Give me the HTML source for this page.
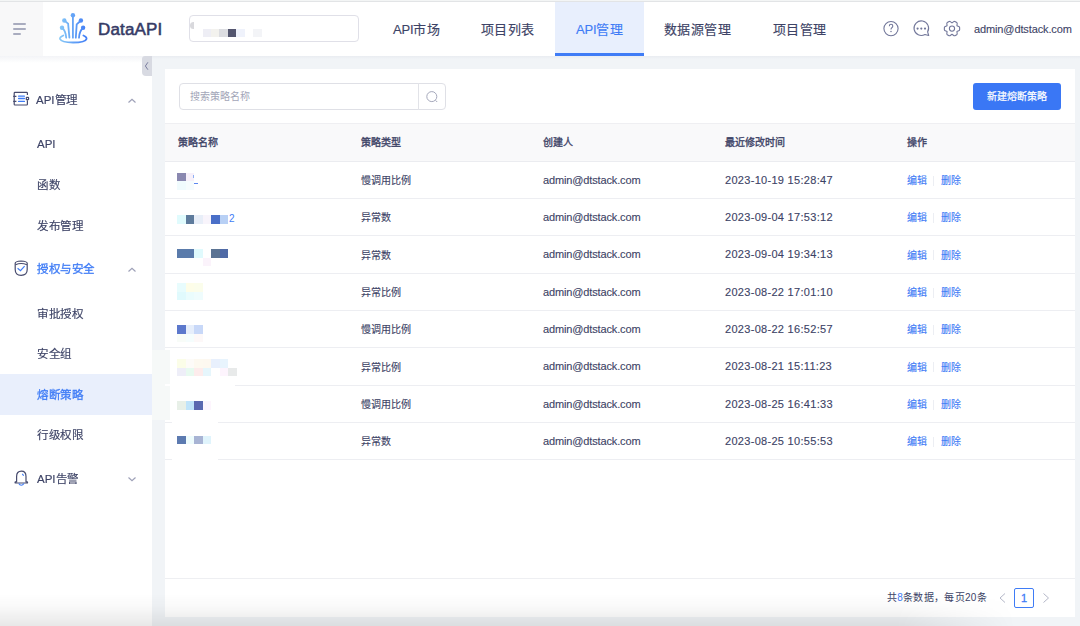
<!DOCTYPE html>
<html lang="zh-CN"><head><meta charset="utf-8">
<style>
*{box-sizing:border-box;margin:0;padding:0}
html,body{width:1080px;height:626px;overflow:hidden;background:#fff;font-family:"Liberation Sans",sans-serif;color:#3d4366}
.abs{position:absolute}
#top{position:absolute;left:0;top:0;width:1080px;height:2px;border-top:1px solid #f3f5f5;background:#e2e4e6}
#hdr{position:absolute;left:0;top:2px;width:1080px;height:54px;background:#fff}
#hamb{position:absolute;left:0;top:2px;width:43px;height:54px;background:#f8f8f9}
#hamb i{position:absolute;left:13px;margin-top:-1px;height:2px;background:#a9acbf;border-radius:1px}
.nav{position:absolute;top:2px;height:55px;font-size:13px;letter-spacing:0.4px;line-height:55px;color:#3d4366;-webkit-text-stroke:0.15px currentColor;white-space:nowrap}
#side{position:absolute;left:0;top:56px;width:152px;height:570px;background:#fff}
#main{position:absolute;left:152px;top:56px;width:928px;height:570px;background:linear-gradient(#e9ecf1,#f1f4f7 3px)}
#card{position:absolute;left:165px;top:69px;width:910px;height:548px;background:#fff}
.si{position:absolute;left:37px;transform:scale(0.96);transform-origin:0 0;font-size:12px;color:#3d4366;-webkit-text-stroke:0.15px currentColor;line-height:16px;white-space:nowrap}
.th{position:absolute;top:135px;font-size:10px;font-weight:400;-webkit-text-stroke:0.35px #3d4366;color:#3d4366;line-height:16px;white-space:nowrap}
.row{position:absolute;left:165px;width:910px}
.ln{position:absolute;left:165px;width:910px;height:1px;background:#edeef2}
.row div{position:absolute;top:1px;line-height:inherit;font-size:10px;color:#3d4366;-webkit-text-stroke:0.12px currentColor;white-space:nowrap}
.row .op{color:#3f7cf6}
.row .em{font-size:11px;letter-spacing:-0.14px;top:0}
.row .dt{font-size:11px;letter-spacing:0.3px;top:0}
.row .sep{top:13.5px;width:1px;height:10px;background:#eceef3}
.mz{position:absolute}
#mz i{position:absolute;width:8.5px;height:8.5px}
</style></head><body>
<div id="top"></div>
<div id="hdr"></div>
<div id="hamb"><i style="top:22px;width:13px"></i><i style="top:27px;width:13px"></i><i style="top:32px;width:8px"></i></div>

<svg class="abs" style="left:55px;top:8px" width="40" height="40" viewBox="0 0 40 40">
<defs><linearGradient id="lg" gradientUnits="userSpaceOnUse" x1="5" y1="0" x2="32" y2="0"><stop offset="0" stop-color="#86c8f7"/><stop offset="1" stop-color="#3f7cf6"/></linearGradient></defs>
<g fill="none" stroke="url(#lg)" stroke-width="1.8" stroke-linecap="round">
<path d="M17.9 7.3V29.7"/>
<path d="M9.3 12.5L13.1 15.6L14.4 29.7"/>
<path d="M7 19.8Q10.6 22.5 11.2 29.7"/>
<path d="M25.9 12.5L21.7 16.3L20.8 29.7"/>
<path d="M28.1 19.8Q24.4 23 24 29.7"/>
<path d="M8.3 27.5Q4.6 29 5 31Q6.5 34.5 18 34.5Q30.5 34.5 31.5 31Q32 29 28.4 27.5"/>
</g>
<g fill="url(#lg)"><circle cx="17.9" cy="7.3" r="2.2"/><circle cx="9.3" cy="12.5" r="2.2"/><circle cx="7" cy="19.8" r="2.2"/><circle cx="25.9" cy="12.5" r="2.2"/><circle cx="28.1" cy="19.8" r="2.2"/></g>
</svg>

<div class="abs" style="left:98px;top:19px;font-size:17px;font-weight:normal;-webkit-text-stroke:0.55px #363b66;letter-spacing:0.15px;color:#363b66;line-height:22px">DataAPI</div>

<div class="abs" style="left:189px;top:15px;width:170px;height:27px;border:1px solid #e0e0e8;border-radius:4px"></div>
<div class="mz" style="left:202.5px;top:28.7px;width:8.3px;height:8px;background:#eeeef5"></div>
<div class="mz" style="left:210.8px;top:28.7px;width:8.2px;height:8px;background:#f3f2ee"></div>
<div class="mz" style="left:219px;top:28.7px;width:9px;height:8px;background:#dcdde1"></div>
<div class="mz" style="left:228px;top:28.7px;width:8px;height:8px;background:#54566f"></div>
<div class="mz" style="left:236px;top:28.7px;width:8.5px;height:8px;background:#eff2fb"></div>
<div class="mz" style="left:253px;top:28.7px;width:9px;height:8px;background:#f3f4f7"></div>
<div class="mz" style="left:189.5px;top:22px;width:4.5px;height:7px;background:#d9d9dd;border-radius:4px 0 0 4px"></div>

<div class="nav" style="left:393px"><span style="letter-spacing:-0.2px">API</span>市场</div>
<div class="nav" style="left:481px">项目列表</div>
<div class="abs" style="left:555px;top:2px;width:89px;height:54px;background:#e8effd"></div>
<div class="abs" style="left:555px;top:53px;width:89px;height:3px;background:#3f7cf6"></div>
<div class="nav" style="left:576px;color:#3f7cf6"><span style="letter-spacing:-0.2px">API</span>管理</div>
<div class="nav" style="left:664px">数据源管理</div>
<div class="nav" style="left:773px">项目管理</div>

<svg class="abs" style="left:876px;top:14px" width="90" height="30" viewBox="0 0 90 30">
<g fill="none" stroke="#72779a" stroke-width="1.1">
<circle cx="15" cy="14.6" r="7.1"/>
<path d="M13.3 12.2Q13.3 10.3 15 10.3Q16.8 10.3 16.8 12Q16.8 13.1 15.8 13.7Q15 14.2 15 15.6"/>
<path d="M51.62 17.85A7.3 7.3 0 1 0 48.95 20.52L52.7 21.5Z" stroke-linejoin="round"/>
<circle cx="76" cy="14.6" r="2.6"/>
<path d="M80.94 11.75 L83.25 12.79 L83.63 13.53 L83.63 15.67 L83.25 16.41 L80.94 17.45 L81.19 19.97 L80.74 20.67 L78.88 21.74 L78.06 21.78 L76.00 20.30 L73.94 21.78 L73.12 21.74 L71.26 20.67 L70.81 19.97 L71.06 17.45 L68.75 16.41 L68.37 15.67 L68.37 13.53 L68.75 12.79 L71.06 11.75 L70.81 9.23 L71.26 8.53 L73.12 7.46 L73.94 7.42 L76.00 8.90 L78.06 7.42 L78.88 7.46 L80.74 8.53 L81.19 9.23Z" stroke-linejoin="round"/>
</g>
<g fill="#72779a"><circle cx="15" cy="17.5" r="0.75"/><circle cx="41.6" cy="14.6" r="1.1"/><circle cx="45.3" cy="14.6" r="1.1"/><circle cx="49" cy="14.6" r="1.1"/></g>
</svg>

<div class="abs" style="left:974px;top:21px;font-size:11px;letter-spacing:-0.12px;line-height:16px;color:#3d4366;-webkit-text-stroke:0.1px currentColor;white-space:nowrap">admin@dtstack.com</div>

<div id="side"></div>
<div id="main"></div>
<div class="abs" style="left:0;top:56px;width:152px;height:7px;background:linear-gradient(#f3f4f7,#fff)"></div>
<div class="abs" style="left:141.5px;top:56px;width:10.5px;height:20px;background:#d8dae2;border-radius:3px 0 0 4px"></div>
<svg class="abs" style="left:141px;top:56px" width="11" height="20"><path d="M6.9 6.3L4.4 10L6.9 13.7" fill="none" stroke="#6f7396" stroke-width="0.9"/></svg>

<!-- sidebar -->
<svg class="abs" style="left:8px;top:88px" width="40" height="24" viewBox="0 0 40 24">
<g fill="none" stroke="#474b6e" stroke-width="1.2">
<path d="M19.4 7V5.2Q19.4 4.4 18.6 4.4H7Q6.2 4.4 6.2 5.2V16.2Q6.2 17 7 17H18.6Q19.4 17 19.4 16.2V12.2"/>
<path d="M5.2 8.3H8.4M5.2 13.4H8.4"/>
<rect x="18.3" y="9.4" width="2.3" height="2.3" rx="0.5"/>
</g>
<g stroke="#3f7cf6" stroke-width="1.3" stroke-linecap="round"><path d="M10.6 8.2H16.4M10.6 10.5H16.4M10.6 13.4H16.4"/></g>
</svg>
<div class="si" style="left:36px;top:92px">API管理</div>
<svg class="abs" style="left:126px;top:96px" width="12" height="10"><path d="M2.5 6.5L6 3.2L9.5 6.5" fill="none" stroke="#9ea1b8" stroke-width="1.2"/></svg>
<div class="si" style="top:136px">API</div>
<div class="si" style="top:176.5px">函数</div>
<div class="si" style="top:217.5px">发布管理</div>

<svg class="abs" style="left:8px;top:256px" width="40" height="26" viewBox="0 0 40 26">
<path d="M7.2 7.3Q7.2 5.3 13 5Q19.2 5.3 19.2 7.3V13.5Q19.2 19.3 13.1 19.3Q7.2 19.3 7.2 13.5Z" fill="none" stroke="#474b6e" stroke-width="1.2"/>
<path d="M7.5 8.7Q13.1 6.4 18.9 8.7" fill="none" stroke="#474b6e" stroke-width="1.1"/>
<path d="M9.6 12.2L12.5 14.6L16.6 10.2" fill="none" stroke="#3f7cf6" stroke-width="1.2"/>
</svg>
<div class="si" style="top:261px;color:#3f7cf6;-webkit-text-stroke:0.3px #3f7cf6">授权与安全</div>
<svg class="abs" style="left:126px;top:265px" width="12" height="10"><path d="M2.5 6.5L6 3.2L9.5 6.5" fill="none" stroke="#9ea1b8" stroke-width="1.2"/></svg>
<div class="si" style="top:305.5px">审批授权</div>
<div class="si" style="top:345.5px">安全组</div>
<div class="abs" style="left:0;top:374px;width:152px;height:41px;background:#e9effc"></div>
<div class="si" style="top:387px;color:#3f7cf6;-webkit-text-stroke:0.3px #3f7cf6">熔断策略</div>
<div class="si" style="top:427px">行级权限</div>

<svg class="abs" style="left:8px;top:466px" width="40" height="26" viewBox="0 0 40 26">
<path d="M8.6 15.6V10.5Q8.6 5.2 13.4 5.2Q18 5.2 18 10.5V15.6Q19.6 15.6 19.6 16.4Q19.6 17 18.7 17H8Q7 17 7 16.4Q7 15.6 8.6 15.6Z" fill="none" stroke="#474b6e" stroke-width="1.2"/>
<path d="M10.8 17.6Q11.6 19.3 13.3 19.3Q15 19.3 15.9 17.6" fill="none" stroke="#3f7cf6" stroke-width="1.1"/>
<path d="M14.1 8.1Q15.2 8.6 15.5 9.8" fill="none" stroke="#3f7cf6" stroke-width="1.1"/>
</svg>
<div class="si" style="top:471px">API告警</div>
<svg class="abs" style="left:126px;top:474px" width="12" height="10"><path d="M2.5 3.5L6 6.8L9.5 3.5" fill="none" stroke="#9ea1b8" stroke-width="1.2"/></svg>

<!-- card -->
<div id="card"></div>
<div class="abs" style="left:179px;top:83px;width:267px;height:27px;border:1px solid #dfe0e6;border-radius:4px"></div>
<div class="abs" style="left:418px;top:83px;width:1px;height:27px;background:#e2e3e8"></div>
<div class="abs" style="left:190px;top:89px;font-size:10px;line-height:16px;color:#a3a6b8">搜索策略名称</div>
<svg class="abs" style="left:424px;top:89px" width="16" height="16"><circle cx="7.8" cy="7.6" r="5" fill="none" stroke="#a5a8bb" stroke-width="1"/><path d="M11.5 11.3L13.2 13" stroke="#a5a8bb" stroke-width="1"/></svg>

<div class="abs" style="left:973px;top:83px;width:88px;height:27px;background:#3a77f5;border-radius:3px;color:#fff;-webkit-text-stroke:0.2px #fff;font-size:10px;line-height:27px;text-align:center;white-space:nowrap">新建熔断策略</div>

<div class="abs" style="left:165px;top:123px;width:910px;height:39px;background:#f9f9fa;border-top:1px solid #efeff2;border-bottom:1px solid #ebecf0"></div>
<div class="th" style="left:178px">策略名称</div>
<div class="th" style="left:361px">策略类型</div>
<div class="th" style="left:543px">创建人</div>
<div class="th" style="left:725px">最近修改时间</div>
<div class="th" style="left:907px">操作</div>

<div class="row" style="top:162px;height:36px;line-height:36px"><div style="left:196px">慢调用比例</div><div class="em" style="left:378px">admin@dtstack.com</div><div class="dt" style="left:560px">2023-10-19 15:28:47</div><div class="op" style="left:742px">编辑</div><div class="sep" style="left:768px"></div><div class="op" style="left:776px">删除</div></div>
<div class="row" style="top:199px;height:36px;line-height:36px"><div style="left:196px">异常数</div><div class="em" style="left:378px">admin@dtstack.com</div><div class="dt" style="left:560px">2023-09-04 17:53:12</div><div class="op" style="left:742px">编辑</div><div class="sep" style="left:768px"></div><div class="op" style="left:776px">删除</div></div>
<div class="row" style="top:236px;height:37px;line-height:37px"><div style="left:196px">异常数</div><div class="em" style="left:378px">admin@dtstack.com</div><div class="dt" style="left:560px">2023-09-04 19:34:13</div><div class="op" style="left:742px">编辑</div><div class="sep" style="left:768px"></div><div class="op" style="left:776px">删除</div></div>
<div class="row" style="top:274px;height:36px;line-height:36px"><div style="left:196px">异常比例</div><div class="em" style="left:378px">admin@dtstack.com</div><div class="dt" style="left:560px">2023-08-22 17:01:10</div><div class="op" style="left:742px">编辑</div><div class="sep" style="left:768px"></div><div class="op" style="left:776px">删除</div></div>
<div class="row" style="top:311px;height:36px;line-height:36px"><div style="left:196px">慢调用比例</div><div class="em" style="left:378px">admin@dtstack.com</div><div class="dt" style="left:560px">2023-08-22 16:52:57</div><div class="op" style="left:742px">编辑</div><div class="sep" style="left:768px"></div><div class="op" style="left:776px">删除</div></div>
<div class="row" style="top:348px;height:37px;line-height:37px"><div style="left:196px">异常比例</div><div class="em" style="left:378px">admin@dtstack.com</div><div class="dt" style="left:560px">2023-08-21 15:11:23</div><div class="op" style="left:742px">编辑</div><div class="sep" style="left:768px"></div><div class="op" style="left:776px">删除</div></div>
<div class="row" style="top:386px;height:36px;line-height:36px"><div style="left:196px">慢调用比例</div><div class="em" style="left:378px">admin@dtstack.com</div><div class="dt" style="left:560px">2023-08-25 16:41:33</div><div class="op" style="left:742px">编辑</div><div class="sep" style="left:768px"></div><div class="op" style="left:776px">删除</div></div>
<div class="row" style="top:423px;height:36px;line-height:36px"><div style="left:196px">异常数</div><div class="em" style="left:378px">admin@dtstack.com</div><div class="dt" style="left:560px">2023-08-25 10:55:53</div><div class="op" style="left:742px">编辑</div><div class="sep" style="left:768px"></div><div class="op" style="left:776px">删除</div></div>

<div class="ln" style="top:198px"></div><div class="ln" style="top:235px"></div><div class="ln" style="top:273px"></div><div class="ln" style="top:310px"></div><div class="ln" style="top:347px"></div><div class="ln" style="top:385px"></div><div class="ln" style="top:422px"></div><div class="ln" style="top:459px"></div>
<div class="abs" style="left:152px;top:350px;width:18px;height:70px;background:#f6f9f8"></div><div class="abs" style="left:165px;top:384px;width:70px;height:2px;background:#fff"></div><div class="abs" style="left:172px;top:422px;width:46px;height:1px;background:#fff"></div><div class="abs" style="left:172px;top:459px;width:46px;height:1px;background:#fff"></div>
<div id="mz"><i style="left:177px;top:172.5px;background:#8a88b0"></i><i style="left:185.5px;top:172.5px;background:#f7f0fa"></i><i style="left:177px;top:181px;background:#f0fbfd"></i><i style="left:185.5px;top:181px;background:#f6fcfd"></i><i style="left:177px;top:215px;background:#e0fbfd"></i><i style="left:185.5px;top:215px;background:#5e7b9c"></i><i style="left:194px;top:215px;background:#e8eef8"></i><i style="left:202.5px;top:215px;background:#f8f4fb"></i><i style="left:211px;top:215px;background:#4a6fc8"></i><i style="left:219.5px;top:215px;background:#b8d0f5"></i><i style="left:177px;top:249px;background:#5a7bab"></i><i style="left:185.5px;top:249px;background:#5a7bab"></i><i style="left:194px;top:249px;background:#e0fafd"></i><i style="left:211px;top:249px;background:#5b7393"></i><i style="left:219.5px;top:249px;background:#4f6aa6"></i><i style="left:202.5px;top:257.5px;background:#fbf3fb"></i><i style="left:177px;top:283px;background:#e8fcfd"></i><i style="left:185.5px;top:283px;background:#fdfde8"></i><i style="left:194px;top:283px;background:#fbfdeb"></i><i style="left:177px;top:291.5px;background:#e0fafd"></i><i style="left:185.5px;top:291.5px;background:#eafcfd"></i><i style="left:194px;top:291.5px;background:#effcfd"></i><i style="left:177px;top:325px;background:#5c78cc"></i><i style="left:185.5px;top:325px;background:#e6eefb"></i><i style="left:194px;top:325px;background:#c8d8f8"></i><i style="left:177px;top:333.5px;background:#f8fcf8"></i><i style="left:185.5px;top:333.5px;background:#f5fdfd"></i><i style="left:194px;top:333.5px;background:#fdf8f8"></i><i style="left:177px;top:359px;background:#fbfde8"></i><i style="left:185.5px;top:359px;background:#fdfbf8"></i><i style="left:194px;top:359px;background:#fdf9f0"></i><i style="left:202.5px;top:359px;background:#fdf8f0"></i><i style="left:211px;top:359px;background:#e8f0fd"></i><i style="left:219.5px;top:359px;background:#e8f4fd"></i><i style="left:177px;top:367.5px;background:#eeeef8"></i><i style="left:185.5px;top:367.5px;background:#e8faf0"></i><i style="left:194px;top:367.5px;background:#fdecec"></i><i style="left:202.5px;top:367.5px;background:#e6f6fc"></i><i style="left:219.5px;top:367.5px;background:#fdf4fd"></i><i style="left:228px;top:367.5px;background:#e8eaea"></i><i style="left:177px;top:401px;background:#e8f0e8"></i><i style="left:185.5px;top:401px;background:#c0e4fa"></i><i style="left:194px;top:401px;background:#5a68b0"></i><i style="left:202.5px;top:401px;background:#fdf5fd"></i><i style="left:177px;top:435.5px;background:#5c7ab0"></i><i style="left:185.5px;top:435.5px;background:#eefcfd"></i><i style="left:194px;top:435.5px;background:#a8b4d4"></i><i style="left:202.5px;top:435.5px;background:#e0f4fc"></i></div>
<div class="abs" style="left:229px;top:211px;font-size:10px;line-height:16px;color:#3f7cf6">2</div>
<div class="abs" style="left:193px;top:175px;width:1px;height:3px;background:#8fb0f3"></div><div class="abs" style="left:194px;top:183px;width:4px;height:1px;background:#5d88f0"></div>
<div class="abs" style="left:165px;top:578px;width:910px;height:1px;background:#eeeff2"></div>
<div class="abs" style="left:887px;top:590px;font-size:10px;letter-spacing:0.3px;line-height:16px;color:#3d4366;white-space:nowrap">共<span style="color:#3f7cf6">8</span>条数据，每页20条</div>
<svg class="abs" style="left:996px;top:590px" width="14" height="16"><path d="M9 3.5L4 8L9 12.5" fill="none" stroke="#b4b7c8" stroke-width="1"/></svg>
<div class="abs" style="left:1014px;top:588px;width:20px;height:20px;border:1px solid #3f7cf6;border-radius:2px;color:#3f7cf6;-webkit-text-stroke:0.3px #3f7cf6;font-size:11px;line-height:18px;text-align:center">1</div>
<svg class="abs" style="left:1040px;top:590px" width="14" height="16"><path d="M3.5 3.5L8.5 8L3.5 12.5" fill="none" stroke="#b4b7c8" stroke-width="1"/></svg>

<div class="abs" style="left:0;top:594px;width:1080px;height:32px;background:linear-gradient(rgba(0,0,0,0),rgba(0,0,0,0.025) 40%,rgba(0,0,0,0.09));-webkit-mask-image:linear-gradient(to right,#000 83%,transparent 94%);mask-image:linear-gradient(to right,#000 83%,transparent 94%)"></div>
</body></html>
